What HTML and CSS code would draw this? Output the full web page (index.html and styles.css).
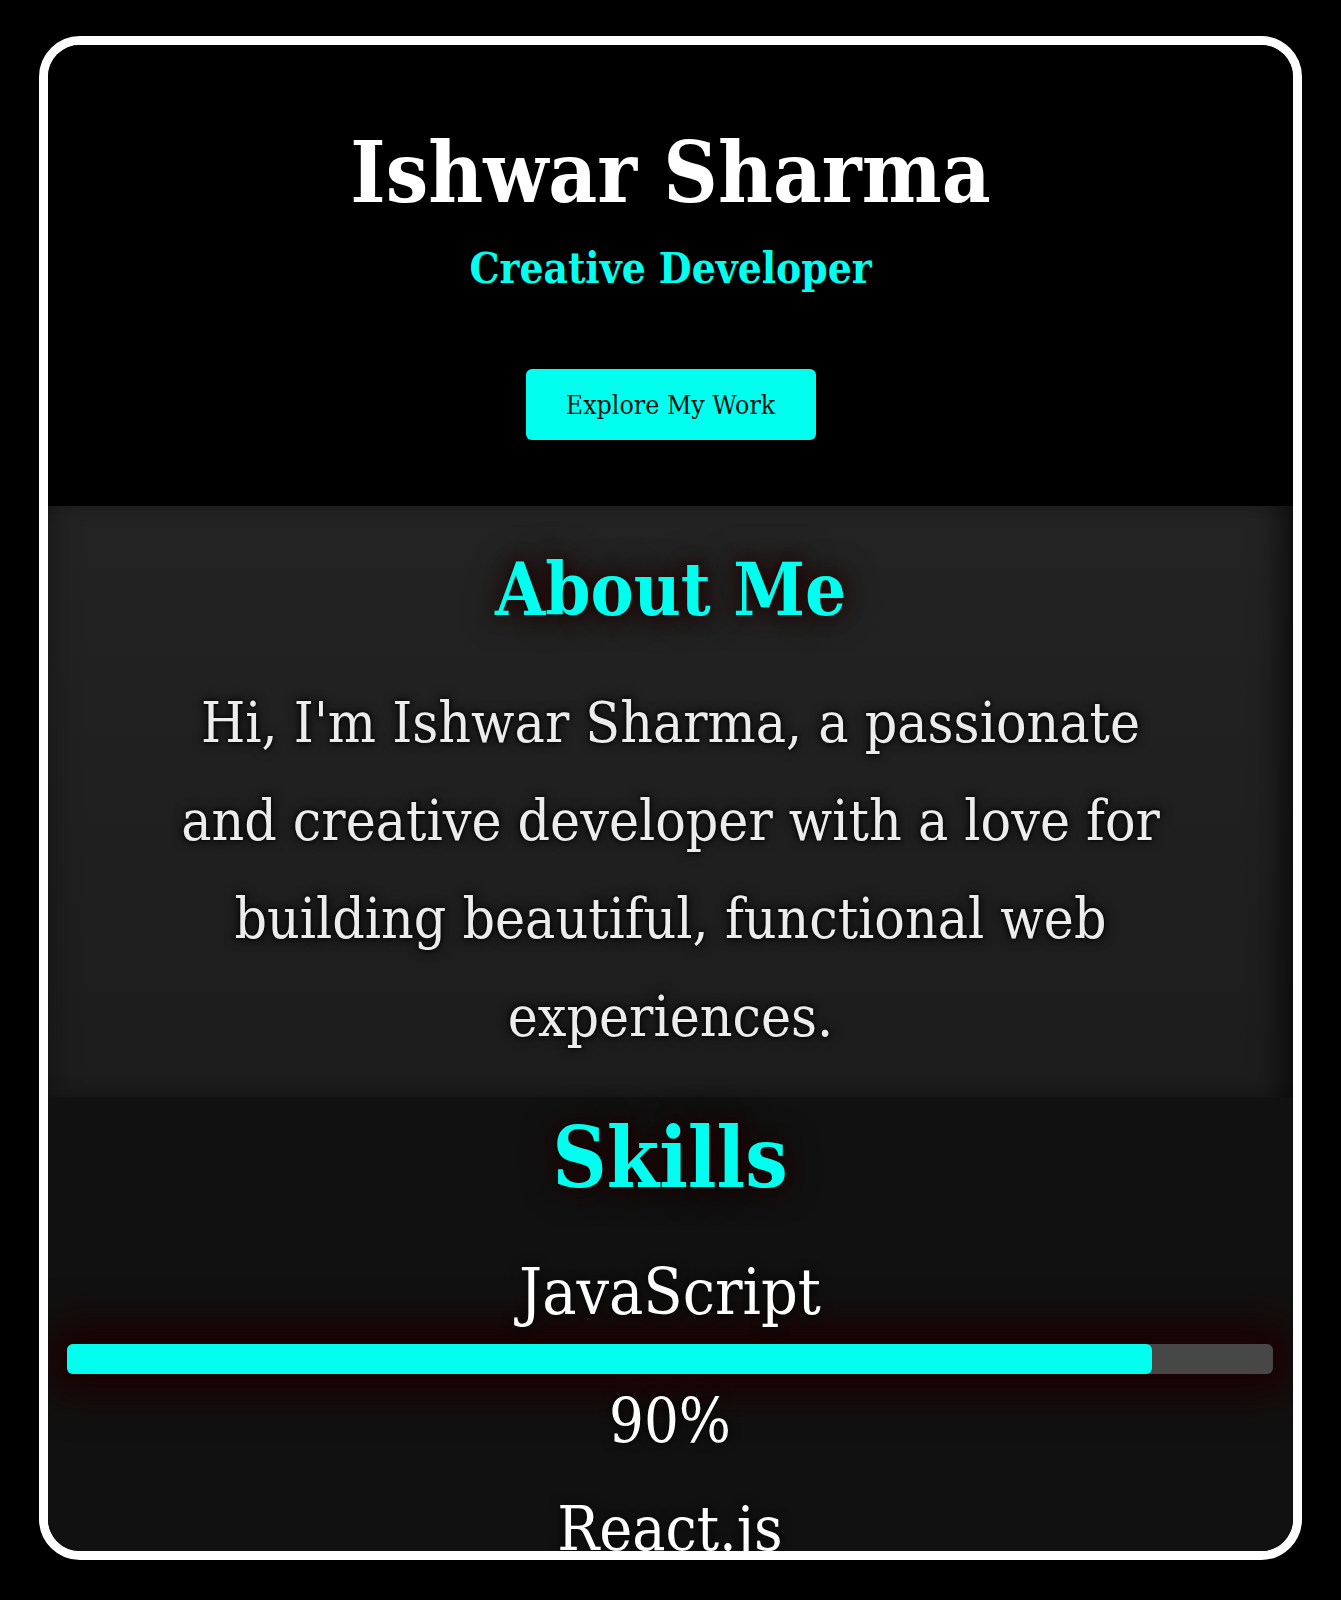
FILE: index.html
```html
<!DOCTYPE html>
<html lang="en">
<head>
<meta charset="utf-8">
<title>Ishwar Sharma</title>
<link rel="stylesheet" href="styles.css">
</head>
<body>
<div class="frame">
  <header class="hero">
    <h1 class="hero-name">Ishwar Sharma</h1>
    <p class="hero-role">Creative Developer</p>
    <a class="hero-btn" href="#">Explore My Work</a>
  </header>
  <section class="about">
    <h2 class="section-title">About Me</h2>
    <p class="about-text">Hi, I'm Ishwar Sharma, a passionate and creative developer with a love for building beautiful, functional web experiences.</p>
  </section>
  <section class="skills">
    <h2 class="section-title skills-title">Skills</h2>
    <div class="skill">
      <div class="skill-name">JavaScript</div>
      <div class="skill-bar"><div class="skill-fill" style="width:90%"></div></div>
      <div class="skill-pct">90%</div>
    </div>
    <div class="skill">
      <div class="skill-name skill-next">React.js</div>
    </div>
  </section>
</div>
</body>
</html>
```

FILE: styles.css
```css
* { box-sizing: border-box; }

html, body {
  margin: 0;
  padding: 0;
  background: #000;
}

body {
  font-family: "DejaVu Serif Condensed", "DejaVu Serif", serif;
  color: #fff;
}

.frame {
  width: 1263px;
  height: 1524px;
  margin: 36px auto 0;
  border: 9px solid #fff;
  border-radius: 41px;
  overflow: hidden;
  background: #000;
}

.hero {
  height: 461px;
  padding-top: 78px;
  text-align: center;
  background: #000;
}

.hero-name {
  margin: 0;
  font-size: 84px;
  line-height: 1.2;
  font-weight: bold;
  color: #fff;
}

.hero-role {
  margin: 20px 0 0;
  font-size: 42px;
  line-height: 1.2;
  font-weight: bold;
  color: #00ffee;
}

.hero-btn {
  display: inline-flex;
  align-items: center;
  justify-content: center;
  width: 290px;
  height: 71px;
  margin-top: 75px;
  background: #00ffee;
  color: #111;
  font-size: 26.5px;
  text-decoration: none;
  border-radius: 6px;
}

.about {
  height: 591px;
  padding-top: 41px;
  text-align: center;
  background: linear-gradient(#232323, #1c1c1c);
  box-shadow: inset -25px 0 30px -15px rgba(0,0,0,0.7), inset 20px 0 30px -20px rgba(0,0,0,0.4);
}

.section-title {
  margin: 0;
  font-size: 72px;
  line-height: 1.2;
  font-weight: bold;
  color: #00ffee;
  text-shadow: 0 0 18px #1e0000, 0 0 34px #1e0000;
}

.about-text {
  width: 1005px;
  margin: 41px auto 0;
  font-size: 56.5px;
  line-height: 98px;
  color: #ececec;
  text-shadow: 0 0 12px #000, 0 0 4px #000;
}

.skills {
  height: 600px;
  padding: 11px 20px 0 19px;
  text-align: center;
  background: #111;
}

.skills-title {
  font-size: 84px;
}

.skill-name {
  margin-top: 45px;
  font-size: 64px;
  line-height: 1.2;
  color: #fff;
  text-shadow: 0 0 12px #000;
}

.skill-next {
  margin-top: 35px;
  font-size: 62px;
}

.skill-bar {
  height: 30px;
  margin-top: 13px;
  background: #474747;
  border-radius: 6px;
  box-shadow: 0 0 40px 20px #1c0000;
}

.skill-fill {
  height: 100%;
  background: #00ffee;
  border-radius: 6px;
}

.skill-pct {
  margin-top: 10px;
  font-size: 61px;
  line-height: 1.2;
  color: #fff;
  text-shadow: 0 0 12px #000;
}
```
